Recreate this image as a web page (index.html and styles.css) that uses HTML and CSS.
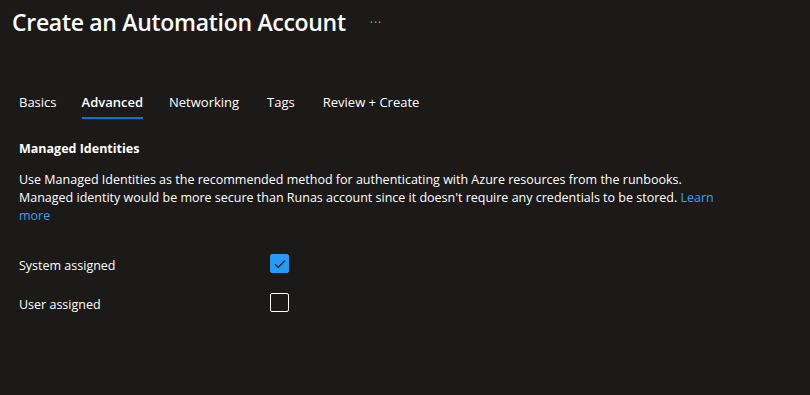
FILE: index.html
```html
<!DOCTYPE html>
<html lang="en">
<head>
    <meta charset="UTF-8" />
    <meta name="viewport" content="width=device-width, initial-scale=1" />
    <title>Create an Automation Account</title>
    <link rel="stylesheet" href="styles.css">
</head>
<body>
    <div class="blade">
        <div class="blade-header">
            <h1 class="blade-title">Create an Automation Account</h1>
            <span class="more-btn">&middot;&middot;&middot;</span>
        </div>

        <ul class="tabs">
            <li class="tab">Basics</li>
            <li class="tab active">Advanced</li>
            <li class="tab">Networking</li>
            <li class="tab">Tags</li>
            <li class="tab">Review + Create</li>
        </ul>

        <div class="section">
            <h2 class="section-title">Managed Identities</h2>
            <p class="section-desc">
                Use Managed Identities as the recommended method for authenticating with Azure resources from the runbooks.<br>
                Managed identity would be more secure than Runas account since it doesn't require any credentials to be stored. <a href="#" class="link">Learn more</a>
            </p>

            <div class="field-row">
                <label class="field-label">System assigned</label>
                <span class="checkbox checked">
                    <svg width="12" height="10" viewBox="0 0 12 10"><path d="M1 5.2 L4.2 8.4 L11 1.6" fill="none" stroke="#1b1a19" stroke-width="1.2"/></svg>
                </span>
            </div>
            <div class="field-row">
                <label class="field-label">User assigned</label>
                <span class="checkbox"></span>
            </div>
        </div>
    </div>
</body>
</html>
```

FILE: styles.css
```css
* {
    margin: 0; padding: 0; box-sizing: border-box;
}
body {
    background: #1b1a19;
    color: #ffffff;
    font-family: 'Open Sans', 'Noto Sans', sans-serif;
    font-size: 12.5px;
    height: 100vh;
}
.blade-header {
    display: flex;
    align-items: center;
    padding: 0 12px;
    height: 44px;
}
.blade-title {
    font-size: 23px;
    font-weight: 600;
    letter-spacing: -0.3px;
}
.more-btn {
    margin-left: 24px;
    color: #a19f9d;
    font-size: 12px;
    letter-spacing: 1px;
}
.tabs {
    list-style: none;
    display: flex;
    gap: 25px;
    margin: 48px 0 0 19px;
}
.tab {
    font-size: 13px;
    padding-bottom: 5px;
    border-bottom: 2px solid transparent;
    line-height: 20px;
}
.tab.active {
    font-weight: 600;
    border-bottom-color: #0078d4;
}
.tab:nth-child(n+3) {
    margin-left: 1px;
}
.tab:nth-child(n+4) {
    margin-left: 3px;
}
.section {
    padding: 0 19px;
}
.section-title {
    font-size: 12.5px;
    font-weight: 700;
    margin-top: 20px;
    line-height: 20px;
}
.section-desc {
    margin-top: 12px;
    line-height: 18px;
    max-width: 700px;
}
.link {
    color: #3aa0f3;
    text-decoration: none;
}
.field-row {
    display: flex;
    align-items: center;
    height: 39px;
}
.field-row:first-of-type {
    margin-top: 19px;
}
.field-label {
    width: 251px;
    padding-top: 3px;
}
.checkbox {
    width: 19px;
    height: 19px;
    border: 1px solid #ffffff;
    border-radius: 2px;
    display: flex;
    align-items: center;
    justify-content: center;
}
.checkbox.checked {
    background: #2899f5;
    border-color: #2899f5;
}
```
